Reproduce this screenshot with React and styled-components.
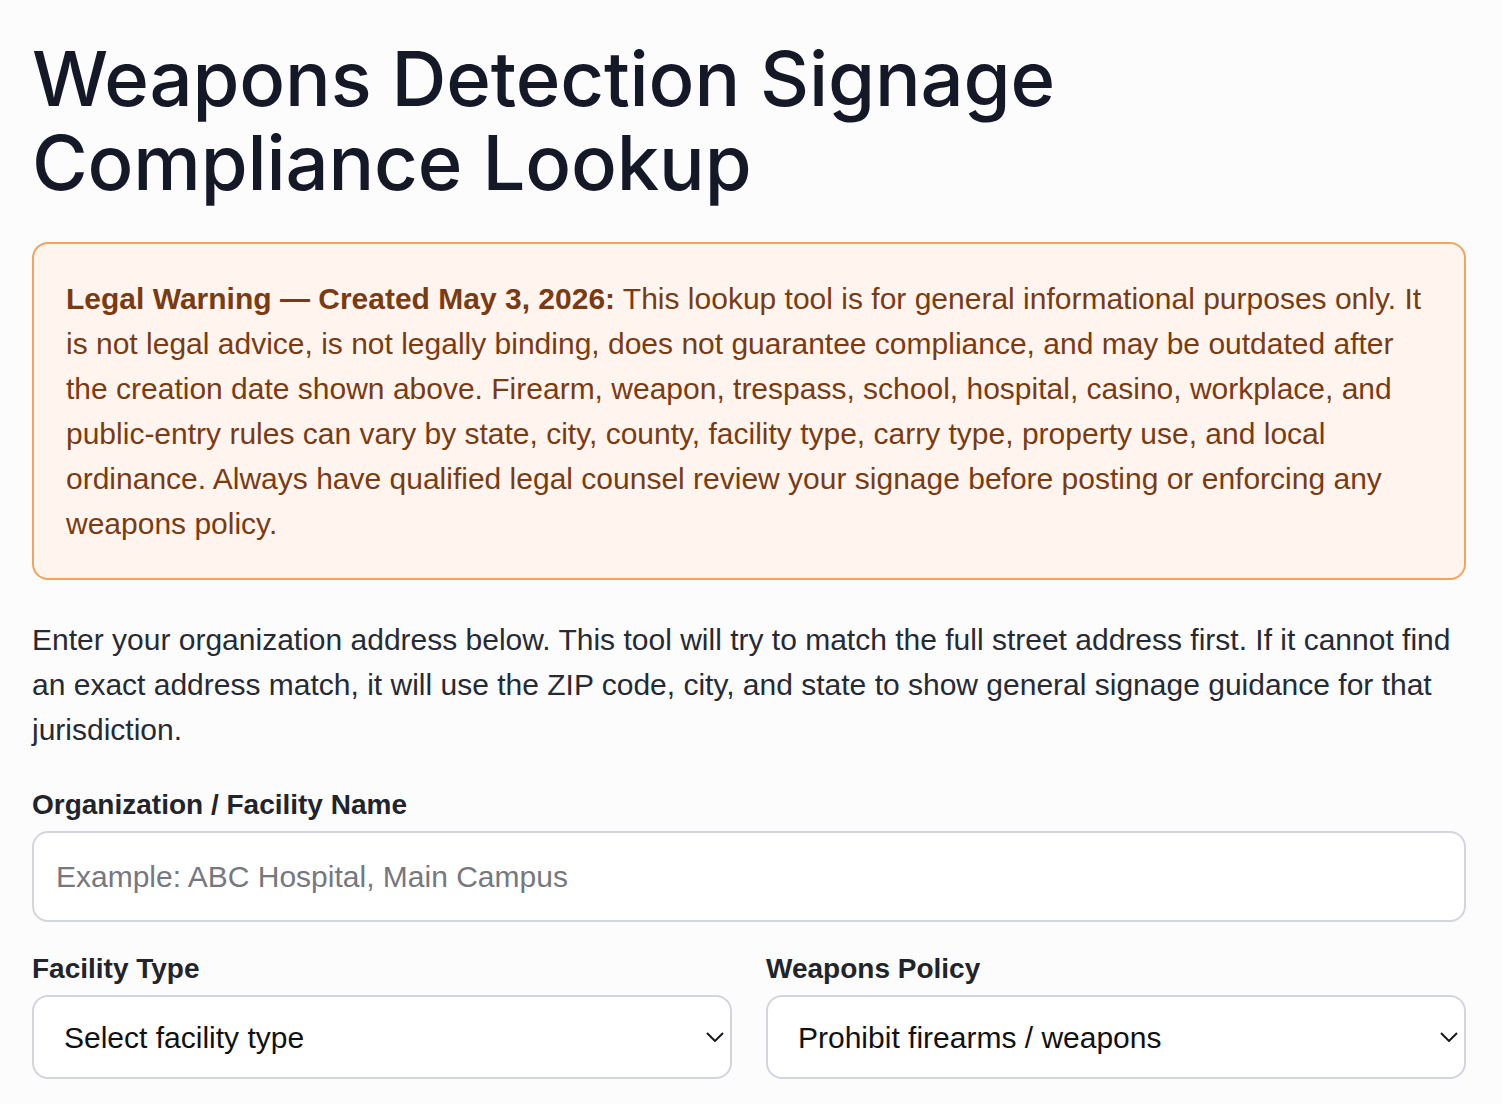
import React from "react";
import styled, { createGlobalStyle } from "styled-components";

const GlobalStyle = createGlobalStyle`
  html, body {
    margin: 0;
    padding: 0;
    background: #fcfcfd;
  }
  body {
    font-family: "Liberation Sans", Arial, sans-serif;
    color: #1f2330;
  }
  * {
    box-sizing: border-box;
  }
`;

const Page = styled.main`
  padding: 36px 36px 40px 32px;
`;

const Title = styled.h1`
  margin: 0 0 38px;
  font-family: Inter, "Liberation Sans", sans-serif;
  font-weight: 500;
  font-size: 76px;
  line-height: 84px;
  letter-spacing: -0.15px;
  color: #151827;
`;

const Warning = styled.div`
  border: 2px solid #f0a45e;
  border-radius: 16px;
  background: #fff5ee;
  padding: 32px 32px 32px;
  color: #7a3b12;
  font-size: 30px;
  line-height: 45px;
`;

const Intro = styled.p`
  margin: 37px 0 36px;
  font-size: 30px;
  line-height: 45px;
  color: #262a33;
`;

const Field = styled.div`
  display: flex;
  flex-direction: column;
  gap: 9px;
`;

const Label = styled.label`
  font-weight: 700;
  font-size: 28px;
  line-height: 34px;
  color: #22242c;
`;

const TextInput = styled.input`
  height: 91px;
  border: 2px solid #d3d5dd;
  border-radius: 16px;
  background: #fff;
  padding: 0 22px;
  font-family: "Liberation Sans", Arial, sans-serif;
  font-size: 30px;
  color: #1f2330;
  outline: none;

  &::placeholder {
    color: #767880;
  }
`;

const Row = styled.div`
  display: grid;
  grid-template-columns: 1fr 1fr;
  gap: 34px;
  margin-top: 30px;
`;

const SelectWrap = styled.div`
  position: relative;
`;

const Select = styled.select`
  width: 100%;
  height: 84px;
  appearance: none;
  border: 2px solid #d3d5dd;
  border-radius: 16px;
  background: #fff;
  padding: 0 60px 0 30px;
  font-family: "Liberation Sans", Arial, sans-serif;
  font-size: 30px;
  color: #111;
  outline: none;
`;

const Chevron = styled.svg`
  position: absolute;
  right: 8px;
  top: 50%;
  transform: translateY(-50%);
  pointer-events: none;
`;

function SelectField({ label, options, value }) {
  return (
    <Field>
      <Label>{label}</Label>
      <SelectWrap>
        <Select defaultValue={value}>
          {options.map((o) => (
            <option key={o}>{o}</option>
          ))}
        </Select>
        <Chevron width="18" height="10" viewBox="0 0 18 10">
          <path d="M1 1l8 8 8-8" fill="none" stroke="#1a1a1a" strokeWidth="2" />
        </Chevron>
      </SelectWrap>
    </Field>
  );
}

export default function App() {
  return (
    <>
      <GlobalStyle />
      <Page>
        <Title>
          Weapons Detection Signage
          <br />
          Compliance Lookup
        </Title>

        <Warning>
          <strong>Legal Warning — Created May 3, 2026:</strong> This lookup tool is for
          general informational purposes only. It is not legal advice, is not legally
          binding, does not guarantee compliance, and may be outdated after the creation
          date shown above. Firearm, weapon, trespass, school, hospital, casino, workplace,
          and public-entry rules can vary by state, city, county, facility type, carry
          type, property use, and local ordinance. Always have qualified legal counsel
          review your signage before posting or enforcing any weapons policy.
        </Warning>

        <Intro>
          Enter your organization address below. This tool will try to match the full
          street address first. If it cannot find an exact address match, it will use the
          ZIP code, city, and state to show general signage guidance for that jurisdiction.
        </Intro>

        <Field>
          <Label htmlFor="org">Organization / Facility Name</Label>
          <TextInput id="org" placeholder="Example: ABC Hospital, Main Campus" />
        </Field>

        <Row>
          <SelectField
            label="Facility Type"
            value="Select facility type"
            options={["Select facility type", "Hospital", "School", "Casino", "Workplace"]}
          />
          <SelectField
            label="Weapons Policy"
            value="Prohibit firearms / weapons"
            options={["Prohibit firearms / weapons", "Allow concealed carry", "No policy"]}
          />
        </Row>
      </Page>
    </>
  );
}
